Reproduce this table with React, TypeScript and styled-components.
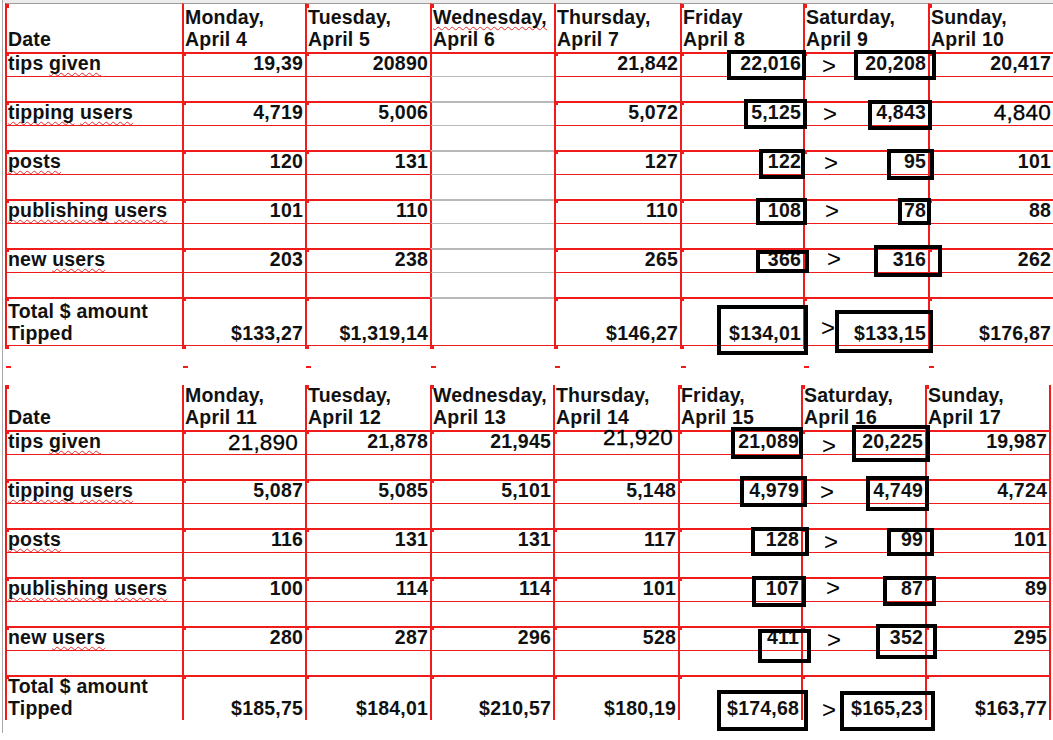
import React from "react";
import styled, { createGlobalStyle, css } from "styled-components";

const RED = "#f01c1c";
const SOFT = "#b9b9b9";

const GlobalStyle = createGlobalStyle`
  html, body { margin: 0; padding: 0; background: #fff; }
  body {
    overflow: hidden;
    font-family: "Liberation Sans", Arial, Helvetica, sans-serif;
    color: #111;
  }
`;

const Page = styled.div`
  position: relative;
  width: 1053px;
  height: 740px;
  overflow: hidden;
  background: #fff;
`;

const Frame = styled.div`
  margin-left: 2px;
  padding-left: 2px;
  border-left: 1px solid #a9a9a9;
  box-sizing: border-box;
  width: 1051px;
  height: 733px;
`;

const TopStrip = styled.div`
  height: 3px;
  margin-left: -2px;
  background: #ececec;
`;

const Sheet = styled.div<{ $cols: string; $head: number; $total: number }>`
  display: grid;
  grid-template-columns: ${(p) => p.$cols};
  grid-template-rows: ${(p) => p.$head}px 24px 25px 24px 25px 24px 25px 24px 25px 24px 25px ${(p) => p.$total}px;
`;

type Kind = "head" | "value" | "blank" | "total";

const borderTop = (kind: Kind, soft?: boolean, lined?: boolean) => {
     const c = soft ? SOFT : RED;
     if (kind === "head") return lined ? "1px solid #9c9c9c" : "none";
     if (kind === "blank") return `1px solid ${c}`;
     return `2px solid ${c}`;
};

const padBottom = (kind: Kind) => (kind === "head" ? 2 : kind === "value" ? 2 : 1);

const Cell = styled.div<{
     $kind: Kind;
     $right?: boolean;
     $soft?: boolean;
     $lined?: boolean;
     $edge?: boolean;
     $closed?: boolean;
     $mark?: boolean;
}>`
position: relative;
box-sizing: border-box;
display: flex;
align-items: flex-end;
justify-content: ${(p) => (p.$right ? "flex-end" : "flex-start")};
border-left: 2px solid ${RED};
border-top: ${(p) => borderTop(p.$kind, p.$soft, p.$lined)};
${(p) => p.$edge && css`border-right: 2px solid ${RED};`}
${(p) => p.$closed && css`border-bottom: 1px solid ${RED};`}
padding: 0 2px ${(p) => padBottom(p.$kind)}px 1px;
font-size: 19.5px;
letter-spacing: 0.2px;
font-weight: 700;
line-height: ${(p) => (p.$kind === "head" || p.$kind === "total" ? 21.5 : 21)}px;
white-space: nowrap;
${(p) =>
          p.$mark &&
          css`
      &::before {
        content: "";
        position: absolute;
        left: -2px;
        top: ${p.$kind === "head" ? 0 : -2}px;
        width: 4px;
        height: 4px;
        background: ${RED};
      }
    `}
`;

const HeadText = styled.div`
  text-align: left;
`;

const Typo = styled.span`
  text-decoration: underline wavy #e42a2a;
  text-decoration-thickness: 1px;
  text-underline-offset: 2px;
  text-decoration-skip-ink: none;
`;

const Num = styled.span<{ $plain?: boolean; $lift?: number; $pad?: number }>`
  font-weight: ${(p) => (p.$plain ? 400 : 700)};
  font-size: ${(p) => (p.$plain ? 22.5 : 19.5)}px;
  color: ${(p) => (p.$plain ? "#000" : "inherit")};
  -webkit-text-stroke: ${(p) => (p.$plain ? "0.3px #000" : "0")};
  margin-bottom: ${(p) => p.$lift || 0}px;
  margin-right: ${(p) => p.$pad || 0}px;
`;

const Gap = styled.div<{ $cols: string }>`
  display: grid;
  grid-template-columns: ${(p) => p.$cols};
  height: 39px;
`;

const GapCell = styled.div`
  position: relative;
  &::before {
    content: "";
    position: absolute;
    left: 0;
    top: 0;
    width: 4px;
    height: 3px;
    background: ${RED};
  }
  &::after {
    content: "";
    position: absolute;
    left: 1px;
    top: 20px;
    width: 5px;
    height: 2px;
    background: ${RED};
  }
`;

const Highlight = styled.div<{ $x: number; $y: number; $w: number; $h: number }>`
  position: absolute;
  left: ${(p) => p.$x}px;
  top: ${(p) => p.$y}px;
  width: ${(p) => p.$w}px;
  height: ${(p) => p.$h}px;
  box-sizing: border-box;
  border: 4px solid #000;
  pointer-events: none;
`;

const Compare = styled.span<{ $x: number; $y: number }>`
  position: absolute;
  left: ${(p) => p.$x - 1}px;
  top: ${(p) => p.$y - 6}px;
  font-size: 24px;
  line-height: 1;
  font-weight: 400;
  color: #000;
`;

type Val = string | { t: string; plain?: boolean; lift?: number; pad?: number };

interface Metric {
     label: React.ReactNode;
     values: Val[];
     total?: boolean;
}

interface Day {
     name: React.ReactNode;
     date: string;
}

const labels: React.ReactNode[] = [
     <>tips <Typo>given</Typo></>,
     <><Typo>tipping</Typo> <Typo>users</Typo></>,
     <Typo>posts</Typo>,
     <><Typo>publishing</Typo> <Typo>users</Typo></>,
     <>new <Typo>users</Typo></>,
     <>Total $ amount<br />Tipped</>,
];

const weekOne: Day[] = [
     { name: "Monday,", date: "April 4" },
     { name: "Tuesday,", date: "April 5" },
     { name: <Typo>Wednesday,</Typo>, date: "April 6" },
     { name: "Thursday,", date: "April 7" },
     { name: "Friday", date: "April 8" },
     { name: "Saturday,", date: "April 9" },
     { name: "Sunday,", date: "April 10" },
];

const weekTwo: Day[] = [
     { name: "Monday,", date: "April 11" },
     { name: "Tuesday,", date: "April 12" },
     { name: "Wednesday,", date: "April 13" },
     { name: "Thursday,", date: "April 14" },
     { name: "Friday,", date: "April 15" },
     { name: "Saturday,", date: "April 16" },
     { name: "Sunday,", date: "April 17" },
];

const dataOne: Val[][] = [
     ["19,39", "20890", "", "21,842", "22,016", "20,208", "20,417"],
     ["4,719", "5,006", "", "5,072", "5,125", "4,843", { t: "4,840", plain: true, pad: 0 }],
     ["120", "131", "", "127", "122", "95", "101"],
     ["101", "110", "", "110", "108", "78", "88"],
     ["203", "238", "", "265", "366", "316", "262"],
     ["$133,27", "$1,319,14", "", "$146,27", "$134,01", "$133,15", "$176,87"],
];

const dataTwo: Val[][] = [
     [{ t: "21,890", plain: true, pad: 5, lift: -1 }, "21,878", "21,945", { t: "21,920", plain: true, lift: 4, pad: 3 }, "21,089", "20,225", "19,987"],
     ["5,087", "5,085", "5,101", "5,148", "4,979", "4,749", "4,724"],
     ["116", "131", "131", "117", "128", "99", "101"],
     ["100", "114", "114", "101", "107", "87", "89"],
     ["280", "287", "296", "528", "411", "352", "295"],
     ["$185,75", "$184,01", "$210,57", "$180,19", "$174,68", "$165,23", "$163,77"],
];

const toMetrics = (rows: Val[][]): Metric[] =>
     rows.map((values, i) => ({ label: labels[i], values, total: i === rows.length - 1 }));

const renderVal = (v: Val) => {
     if (typeof v === "string") return <Num>{v}</Num>;
     return (
          <Num $plain={v.plain} $lift={v.lift} $pad={v.pad}>
               {v.t}
          </Num>
     );
};

interface TableProps {
     cols: string;
     days: Day[];
     metrics: Metric[];
     head: number;
     total: number;
     lined?: boolean;
     closed?: boolean;
     edge?: boolean;
     softCol?: number;
}

function Table({ cols, days, metrics, head, total, lined, closed, edge, softCol }: TableProps) {
     const last = days.length;
     const cells: React.ReactNode[] = [];

     cells.push(
          <Cell key="h-date" $kind="head" $lined={lined} $mark>
               <HeadText>Date</HeadText>
          </Cell>
     );
     days.forEach((d, c) => {
          cells.push(
               <Cell key={`h-${c}`} $kind="head" $lined={lined} $edge={edge && c === last - 1} $mark={c !== 0 && c !== 3}>
                    <HeadText>
                         {d.name}
                         <br />
                         {d.date}
                    </HeadText>
               </Cell>
          );
     });

     metrics.forEach((m, r) => {
          const kind: Kind = m.total ? "total" : "value";
          cells.push(
               <Cell key={`l-${r}`} $kind={kind} $closed={closed && m.total} $mark>
                    <HeadText>{m.label}</HeadText>
               </Cell>
          );
          m.values.forEach((v, c) => {
               const soft = softCol === c && r > 0;
               cells.push(
                    <Cell
                         key={`v-${r}-${c}`}
                         $kind={kind}
                         $right
                         $soft={soft}
                         $edge={edge && c === last - 1}
                         $closed={closed && m.total}
                         $mark={softCol !== c}
                    >
                         {renderVal(v)}
                    </Cell>
               );
          });
          if (!m.total) {
               for (let c = 0; c <= last; c++) {
                    cells.push(
                         <Cell
                              key={`b-${r}-${c}`}
                              $kind="blank"
                              $soft={softCol === c - 1}
                              $edge={edge && c === last}
                         />
                    );
               }
          }
     });

     return (
          <Sheet $cols={cols} $head={head} $total={total}>
               {cells}
          </Sheet>
     );
}

const colsOne = "177px 123px 125px 124px 126px 123px 125px 125px";
const colsTwo = "177px 123px 125px 123px 125px 123px 124px 126px";

const boxes: [number, number, number, number][] = [
     [727, 50, 806, 80],
     [854, 50, 936, 80],
     [744, 99, 807, 129],
     [868, 100, 932, 130],
     [759, 149, 805, 179],
     [887, 149, 934, 180],
     [756, 198, 807, 225],
     [898, 198, 931, 225],
     [756, 250, 809, 273],
     [874, 245, 942, 277],
     [717, 305, 808, 355],
     [835, 310, 933, 353],
     [731, 427, 803, 459],
     [852, 425, 930, 462],
     [740, 476, 807, 507],
     [866, 476, 929, 511],
     [751, 527, 809, 556],
     [887, 528, 934, 556],
     [752, 576, 806, 607],
     [883, 576, 936, 606],
     [758, 629, 811, 663],
     [876, 624, 937, 659],
     [717, 690, 808, 731],
     [840, 691, 935, 731],
];

const arrows: [number, number][] = [
     [823, 60],
     [824, 108],
     [825, 157],
     [826, 205],
     [828, 253],
     [822, 322],
     [823, 440],
     [821, 486],
     [825, 536],
     [827, 582],
     [828, 634],
     [823, 704],
];

export default function App() {
     return (
          <>
               <GlobalStyle />
               <Page>
                    <Frame>
                         <TopStrip />
                         <Table
                              cols={colsOne}
                              days={weekOne}
                              metrics={toMetrics(dataOne)}
                              head={49}
                              total={49}
                              lined
                              closed
                              softCol={2}
                         />
                         <Gap $cols={colsOne}>
                              {Array.from({ length: 8 }, (_, i) => (
                                   <GapCell key={i} />
                              ))}
                         </Gap>
                         <Table
                              cols={colsTwo}
                              days={weekTwo}
                              metrics={toMetrics(dataTwo)}
                              head={45}
                              total={45}
                              edge
                         />
                    </Frame>
                    {boxes.map(([x1, y1, x2, y2], i) => (
                         <Highlight key={i} $x={x1} $y={y1} $w={x2 - x1} $h={y2 - y1} />
                    ))}
                    {arrows.map(([x, y], i) => (
                         <Compare key={i} $x={x} $y={y}>
                              &gt;
                         </Compare>
                    ))}
               </Page>
          </>
     );
}
